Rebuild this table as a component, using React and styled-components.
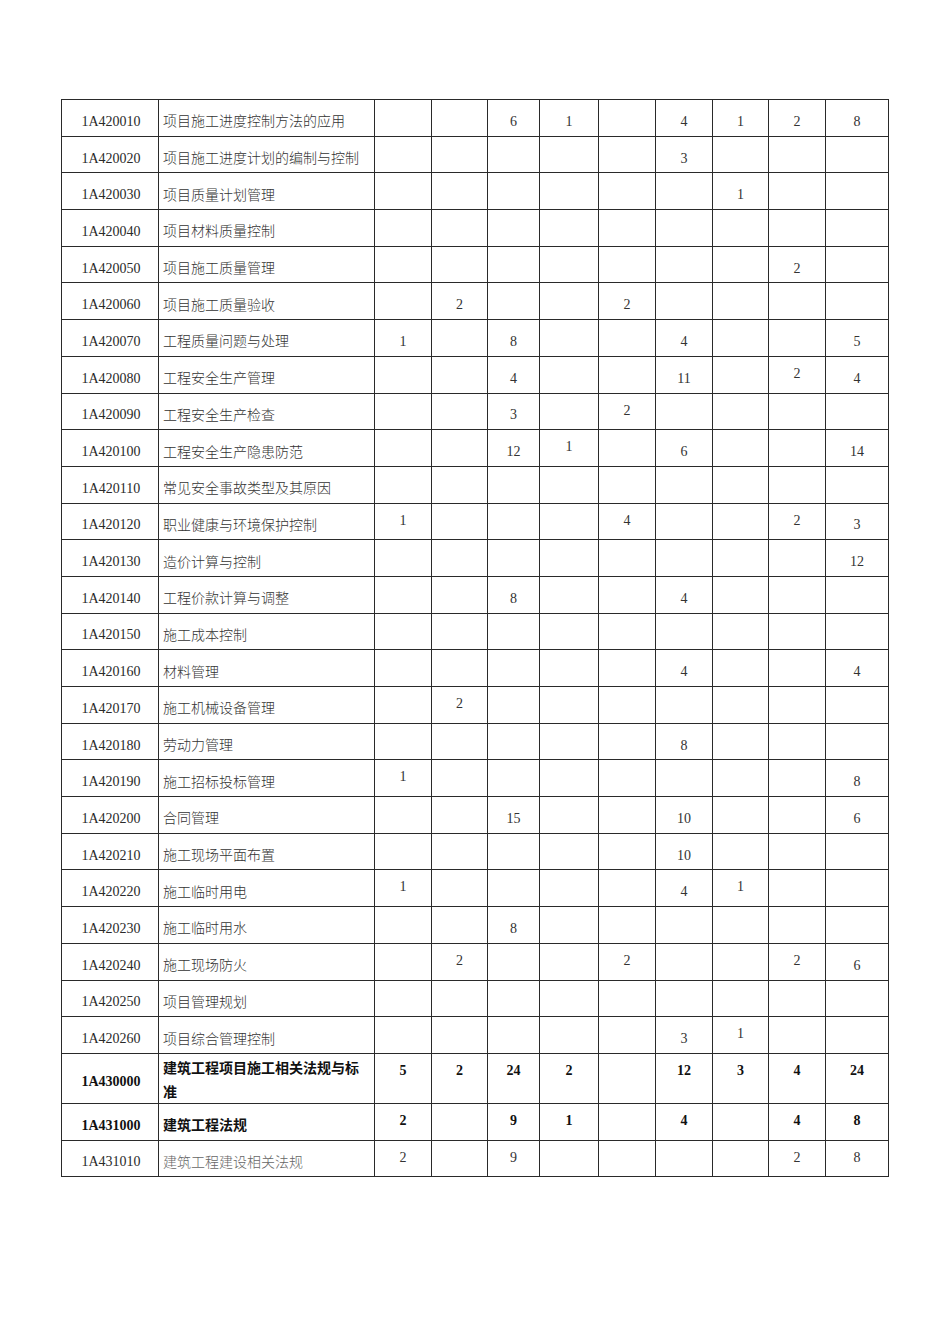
import { createGlobalStyle, styled } from "styled-components";

const GlobalStyle = createGlobalStyle`
    html, body {
        margin: 0;
        padding: 0;
        background: #ffffff;
    }
    body {
        font-family: "Liberation Serif", "Noto Sans CJK SC", serif;
    }
`;

// u = raised value (sits nearer the top of its cell)
const rows = [
    { code: "1A420010", name: "项目施工进度控制方法的应用", v: { 3: "6", 4: "1", 6: "4", 7: "1", 8: "2", 9: "8" } },
    { code: "1A420020", name: "项目施工进度计划的编制与控制", v: { 6: "3" } },
    { code: "1A420030", name: "项目质量计划管理", v: { 7: "1" } },
    { code: "1A420040", name: "项目材料质量控制", v: {} },
    { code: "1A420050", name: "项目施工质量管理", v: { 8: "2" } },
    { code: "1A420060", name: "项目施工质量验收", v: { 2: "2", 5: "2" } },
    { code: "1A420070", name: "工程质量问题与处理", v: { 1: "1", 3: "8", 6: "4", 9: "5" } },
    { code: "1A420080", name: "工程安全生产管理", v: { 3: "4", 6: "11", 8: "2", 9: "4" }, u: [8] },
    { code: "1A420090", name: "工程安全生产检查", v: { 3: "3", 5: "2" }, u: [5] },
    { code: "1A420100", name: "工程安全生产隐患防范", v: { 3: "12", 4: "1", 6: "6", 9: "14" }, u: [4] },
    { code: "1A420110", name: "常见安全事故类型及其原因", v: {} },
    { code: "1A420120", name: "职业健康与环境保护控制", v: { 1: "1", 5: "4", 8: "2", 9: "3" }, u: [1, 5, 8] },
    { code: "1A420130", name: "造价计算与控制", v: { 9: "12" } },
    { code: "1A420140", name: "工程价款计算与调整", v: { 3: "8", 6: "4" } },
    { code: "1A420150", name: "施工成本控制", v: {} },
    { code: "1A420160", name: "材料管理", v: { 6: "4", 9: "4" } },
    { code: "1A420170", name: "施工机械设备管理", v: { 2: "2" }, u: [2] },
    { code: "1A420180", name: "劳动力管理", v: { 6: "8" } },
    { code: "1A420190", name: "施工招标投标管理", v: { 1: "1", 9: "8" }, u: [1] },
    { code: "1A420200", name: "合同管理", v: { 3: "15", 6: "10", 9: "6" } },
    { code: "1A420210", name: "施工现场平面布置", v: { 6: "10" } },
    { code: "1A420220", name: "施工临时用电", v: { 1: "1", 6: "4", 7: "1" }, u: [1, 7] },
    { code: "1A420230", name: "施工临时用水", v: { 3: "8" } },
    { code: "1A420240", name: "施工现场防火", v: { 2: "2", 5: "2", 8: "2", 9: "6" }, u: [2, 5, 8] },
    { code: "1A420250", name: "项目管理规划", v: {} },
    { code: "1A420260", name: "项目综合管理控制", v: { 6: "3", 7: "1" }, u: [7] },
    { code: "1A430000", name: "建筑工程项目施工相关法规与标准", bold: true, tall: true, v: { 1: "5", 2: "2", 3: "24", 4: "2", 6: "12", 7: "3", 8: "4", 9: "24" }, u: [1, 2, 3, 4, 6, 7, 8, 9] },
    { code: "1A431000", name: "建筑工程法规", bold: true, v: { 1: "2", 3: "9", 4: "1", 6: "4", 8: "4", 9: "8" }, u: [1, 3, 4, 6, 8, 9] },
    { code: "1A431010", name: "建筑工程建设相关法规", light: true, v: { 1: "2", 3: "9", 8: "2", 9: "8" }, u: [1, 3, 8, 9] },
];

const widths = [97, 216, 57, 56, 52, 59, 57, 57, 56, 57, 63];

export default function App() {
    return (
        <Page>
            <GlobalStyle />
            <Table>
                <colgroup>
                    {widths.map((w, i) => (
                        <col key={i} style={{ width: w }} />
                    ))}
                </colgroup>
                <tbody>
                    {rows.map((row) => (
                        <Row key={row.code} $tall={row.tall}>
                            <CodeCell $bold={row.bold}>{row.code}</CodeCell>
                            <NameCell $bold={row.bold} $light={row.light} $tall={row.tall}>
                                {row.name}
                            </NameCell>
                            {[1, 2, 3, 4, 5, 6, 7, 8, 9].map((c) => (
                                <ValueCell
                                    key={c}
                                    $bold={row.bold}
                                    $up={row.u && row.u.includes(c)}
                                >
                                    {row.v[c] || ""}
                                </ValueCell>
                            ))}
                        </Row>
                    ))}
                </tbody>
            </Table>
        </Page>
    );
}

const Page = styled.div`
    width: 950px;
    min-height: 1344px;
    box-sizing: border-box;
    padding: 99px 0 0 61px;
    background: #ffffff;
`;

const Table = styled.table`
    width: 828px;
    table-layout: fixed;
    border-collapse: collapse;
    border: 1px solid #111;
`;

const Row = styled.tr`
    height: ${(p) => (p.$tall ? "50px" : "36.7px")};
`;

const Cell = styled.td`
    border: 1px solid #2a2a2a;
    box-sizing: border-box;
    padding: 8px 4px 0;
    vertical-align: middle;
    font-size: 14px;
    line-height: 20px;
    color: #222;
    overflow: hidden;
`;

const CodeCell = styled(Cell)`
    text-align: center;
    font-family: "Liberation Serif", serif;
    font-weight: ${(p) => (p.$bold ? 700 : 400)};
    color: ${(p) => (p.$bold ? "#111" : "#2a2a2a")};
    padding-left: 2px;
    padding-right: 0;
`;

const NameCell = styled(Cell)`
    text-align: left;
    font-family: "Noto Sans CJK SC", sans-serif;
    font-weight: ${(p) => (p.$bold ? 700 : 300)};
    color: ${(p) => (p.$bold ? "#111" : p.$light ? "#666" : "#333")};
    padding: ${(p) => (p.$tall ? "1px 4px 0" : "5px 4px 0")};
    line-height: ${(p) => (p.$tall ? "24px" : "20px")};
    white-space: normal;
`;

const ValueCell = styled(Cell)`
    text-align: center;
    font-family: "Liberation Serif", serif;
    font-weight: ${(p) => (p.$bold ? 700 : 400)};
    color: ${(p) => (p.$bold ? "#111" : "#333")};
    vertical-align: ${(p) => (p.$up ? "top" : "middle")};
    padding-top: ${(p) => (p.$up ? "7px" : "8px")};
`;
